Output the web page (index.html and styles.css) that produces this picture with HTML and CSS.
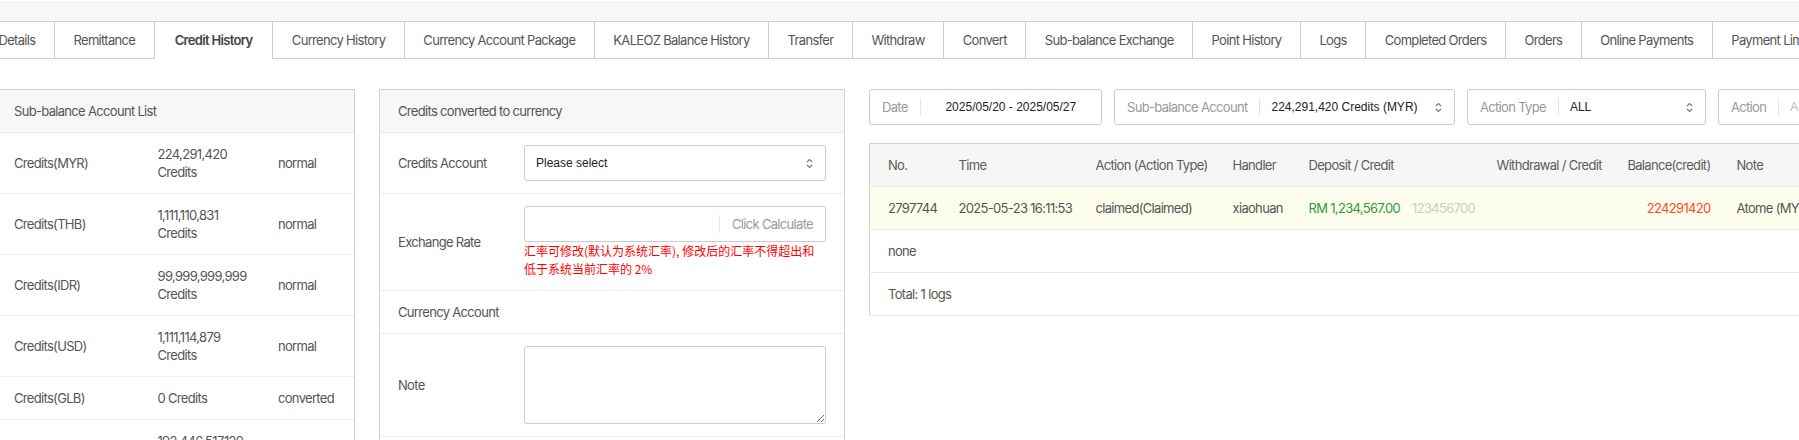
FILE: index.html
```html
<!DOCTYPE html>
<html lang="en">
<head>
<meta charset="utf-8">
<title>Credit History</title>
<link rel="stylesheet" href="styles.css">
</head>
<body>
<div class="topbar"></div>
<nav class="tabs">
  <a class="tab">Details</a>
  <a class="tab">Remittance</a>
  <a class="tab active">Credit History</a>
  <a class="tab">Currency History</a>
  <a class="tab">Currency Account Package</a>
  <a class="tab">KALEOZ Balance History</a>
  <a class="tab">Transfer</a>
  <a class="tab">Withdraw</a>
  <a class="tab">Convert</a>
  <a class="tab">Sub-balance Exchange</a>
  <a class="tab">Point History</a>
  <a class="tab">Logs</a>
  <a class="tab">Completed Orders</a>
  <a class="tab">Orders</a>
  <a class="tab">Online Payments</a>
  <a class="tab">Payment Limits</a>
</nav>

<main class="content">
  <section class="panel list-panel">
    <div class="panel-head">Sub-balance Account List</div>
    <div class="list-row"><span>Credits(MYR)</span><span class="amt">224,291,420 Credits</span><span>normal</span></div>
    <div class="list-row"><span>Credits(THB)</span><span class="amt">1,111,110,831 Credits</span><span>normal</span></div>
    <div class="list-row"><span>Credits(IDR)</span><span class="amt">99,999,999,999 Credits</span><span>normal</span></div>
    <div class="list-row"><span>Credits(USD)</span><span class="amt">1,111,114,879 Credits</span><span>normal</span></div>
    <div class="list-row"><span>Credits(GLB)</span><span class="amt">0 Credits</span><span>converted</span></div>
    <div class="list-row"><span>Credits(SGD)</span><span class="amt">192,446,517,120 Credits</span><span>normal</span></div>
  </section>

  <section class="panel form-panel">
    <div class="panel-head">Credits converted to currency</div>
    <div class="form-row">
      <label class="form-label">Credits Account</label>
      <div class="field">
        <div class="select">
          <span>Please select</span>
          <svg class="arrows" width="7" height="11" viewBox="0 0 7 11"><path d="M1 4 L3.5 1.5 L6 4 M1 7 L3.5 9.5 L6 7" fill="none" stroke="#777" stroke-width="1.1"/></svg>
        </div>
      </div>
    </div>
    <div class="form-row">
      <label class="form-label">Exchange Rate</label>
      <div class="field">
        <div class="input-group">
          <span class="input-space"></span>
          <span class="addon">Click Calculate</span>
        </div>
        <p class="hint">汇率可修改(默认为系统汇率), 修改后的汇率不得超出和低于系统当前汇率的 2%</p>
      </div>
    </div>
    <div class="form-row">
      <label class="form-label">Currency Account</label>
      <div class="field"></div>
    </div>
    <div class="form-row">
      <label class="form-label">Note</label>
      <div class="field"><textarea class="note"></textarea></div>
    </div>
    <div class="form-row tall"></div>
  </section>

  <section class="records">
    <div class="filters">
      <div class="filter f-date">
        <span class="filter-label">Date</span>
        <span class="filter-value center">2025/05/20 - 2025/05/27</span>
      </div>
      <div class="filter f-sub">
        <span class="filter-label">Sub-balance Account</span>
        <span class="filter-value">224,291,420 Credits (MYR)</span>
        <svg class="arrows" width="7" height="11" viewBox="0 0 7 11"><path d="M1 4 L3.5 1.5 L6 4 M1 7 L3.5 9.5 L6 7" fill="none" stroke="#777" stroke-width="1.1"/></svg>
      </div>
      <div class="filter f-type">
        <span class="filter-label">Action Type</span>
        <span class="filter-value">ALL</span>
        <svg class="arrows" width="7" height="11" viewBox="0 0 7 11"><path d="M1 4 L3.5 1.5 L6 4 M1 7 L3.5 9.5 L6 7" fill="none" stroke="#777" stroke-width="1.1"/></svg>
      </div>
      <div class="filter f-action">
        <span class="filter-label">Action</span>
        <span class="filter-value placeholder">ALL</span>
      </div>
    </div>

    <table class="log-table">
      <colgroup>
        <col class="c-no"><col class="c-time"><col class="c-action"><col class="c-handler"><col class="c-dep"><col class="c-wd"><col class="c-bal"><col class="c-note">
      </colgroup>
      <thead>
        <tr>
          <th>No.</th><th>Time</th><th>Action (Action Type)</th><th>Handler</th><th>Deposit / Credit</th><th>Withdrawal / Credit</th><th class="right">Balance(credit)</th><th>Note</th>
        </tr>
      </thead>
      <tbody>
        <tr class="hl">
          <td>2797744</td><td>2025-05-23 16:11:53</td><td>claimed(Claimed)</td><td>xiaohuan</td>
          <td><span class="green">RM 1,234,567.00</span><span class="muted">123456700</span></td>
          <td></td><td class="right red">224291420</td><td>Atome (MYR)</td>
        </tr>
        <tr><td colspan="8">none</td></tr>
        <tr><td colspan="8">Total: 1 logs</td></tr>
      </tbody>
    </table>
  </section>
</main>
</body>
</html>
```

FILE: styles.css
```css
html, body {
  margin: 0;
  padding: 0;
}
body {
  width: 1799px;
  height: 440px;
  overflow: hidden;
  background: #fff;
  font-family: Inter, "Noto Sans CJK SC", sans-serif;
  font-size: 13px;
  letter-spacing: -0.68px;
  color: #555;
}

.topbar {
  margin-top: 2px;
  height: 18px;
  border-top: 1px solid #ebebeb;
  background: #f7f7f7;
}

.tabs {
  display: flex;
  margin-left: -20px;
  height: 36px;
  border-top: 1px solid #cfcfcf;
  border-bottom: 1px solid #cfcfcf;
}
.tab {
  flex-shrink: 0;
  height: 37px;
  margin-bottom: -1px;
  padding: 0 18.5px;
  line-height: 36px;
  white-space: nowrap;
  border-right: 1px solid #cfcfcf;
  color: #555;
}
.tab.active {
  padding: 0 20px;
  background: #fff;
  font-weight: 600;
  color: #444;
}

.content {
  display: flex;
  align-items: flex-start;
  gap: 24px;
  margin: 30px 0 0 -5px;
}

.panel {
  flex-shrink: 0;
  box-sizing: border-box;
  border: 1px solid #d2d2d2;
  background: #fff;
}
.list-panel { width: 360px; }
.form-panel { width: 466px; }

.panel-head {
  padding: 12px 18px;
  line-height: 18px;
  background: #f7f7f7;
  border-bottom: 1px solid #ececec;
  color: #555;
}

.list-row {
  display: grid;
  grid-template-columns: 143.5px 120.5px 1fr;
  align-items: center;
  padding: 12px 18px;
  line-height: 18px;
  border-bottom: 1px solid #ececec;
}
.list-row .amt { padding-right: 18px; }

.form-row {
  display: grid;
  grid-template-columns: 126px 1fr;
  align-items: center;
  padding: 12px 18px;
  line-height: 18px;
  border-bottom: 1px solid #ececec;
  min-height: 18px;
}
.form-row.tall { height: 60px; }

.select,
.input-group {
  box-sizing: border-box;
  height: 36px;
  border: 1px solid #cccccc;
  border-radius: 3px;
  display: flex;
  align-items: center;
}
.select {
  justify-content: space-between;
  padding: 0 12px 0 11px;
  font-family: "Liberation Sans", Arial, sans-serif;
  font-size: 12px;
  letter-spacing: 0;
  color: #222;
}
.input-space { flex: 1; }
.addon {
  padding: 0 12px 0 12px;
  line-height: 18px;
  border-left: 1px solid #e4e4e4;
  color: #999;
}
.hint {
  margin: 0;
  font-family: "Noto Sans CJK SC", sans-serif;
  font-size: 12px;
  letter-spacing: 0;
  line-height: 18px;
  color: #ff0000;
}
.note {
  display: block;
  box-sizing: border-box;
  width: 100%;
  height: 78px;
  margin: 0;
  border: 1px solid #cccccc;
  border-radius: 3px;
  background: #fff;
}

.records {
  flex-shrink: 0;
  width: 1100px;
}
.filters {
  display: flex;
  gap: 12px;
}
.filter {
  flex-shrink: 0;
  box-sizing: border-box;
  height: 36px;
  border: 1px solid #cccccc;
  border-radius: 3px;
  display: flex;
  align-items: center;
  padding-right: 12px;
}
.f-date { width: 233px; padding-right: 0; }
.f-sub { width: 341px; }
.f-type { width: 239px; }
.f-action { width: 240px; }
.filter-label {
  padding: 0 12px;
  line-height: 18px;
  border-right: 1px solid #e4e4e4;
  color: #999;
  white-space: nowrap;
}
.filter-value {
  flex: 1;
  margin-left: 11px;
  font-family: "Liberation Sans", Arial, sans-serif;
  font-size: 12px;
  letter-spacing: 0;
  color: #222;
  white-space: nowrap;
}
.filter-value.center {
  margin-left: 0;
  text-align: center;
}
.filter-value.placeholder { color: #bbb; }

.log-table {
  margin-top: 18px;
  width: 1100px;
  table-layout: fixed;
  border-collapse: collapse;
  border: 1px solid #d2d2d2;
}
.c-no { width: 81px; }
.c-time { width: 137px; }
.c-action { width: 137px; }
.c-handler { width: 76px; }
.c-dep { width: 188px; }
.c-wd { width: 122px; }
.c-bal { width: 118px; }
.c-note { width: 241px; }

.log-table th,
.log-table td {
  padding: 12px 8px;
  line-height: 18px;
  text-align: left;
  font-weight: normal;
  white-space: nowrap;
  overflow: hidden;
  border-bottom: 1px solid #e8e8e8;
}
.log-table th:first-child,
.log-table td:first-child { padding-left: 18px; }
.log-table th { background: #f6f6f6; color: #5c5c5c; }
.log-table .right { text-align: right; padding-right: 18px; }
.log-table tr.hl td { background: #fdfdee; }
.green { color: #2e9a3a; }
.muted { color: #cccccc; margin-left: 12px; }
.red { color: #ff4a1c; }
```
